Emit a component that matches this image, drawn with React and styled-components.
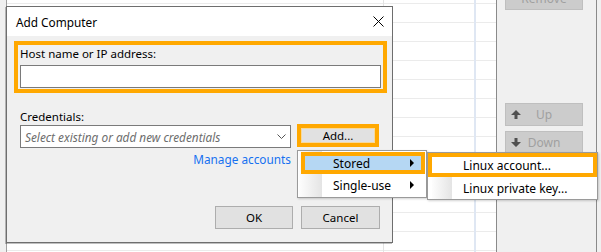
import React from 'react';
import styled, { createGlobalStyle } from 'styled-components';

const ORANGE = '#ffa800';

const GlobalStyle = createGlobalStyle`
  html, body {
    margin: 0;
    padding: 0;
  }
  body {
    font-family: "Noto Sans", "Open Sans", sans-serif;
    font-size: 11.5px;
    color: #000;
  }
  * {
    box-sizing: border-box;
  }
`;

const Screen = styled.div`
  position: relative;
  width: 601px;
  height: 252px;
  overflow: hidden;
  display: flex;
  background: #f0f0f0;
`;

const LeftStrip = styled.div`
  width: 7px;
  background: #f0f0f0;
  border-right: 1px solid #a0a0a0;
`;

const Table = styled.div`
  width: 489px;
  display: flex;
  background: #fff;
`;

const Column = styled.div`
  width: ${p => p.$w ? `${p.$w}px` : 'auto'};
  flex: ${p => p.$w ? 'none' : '1'};
  border-right: ${p => p.$line || 'none'};
  background-image: repeating-linear-gradient(to bottom, #ebebeb 0 1px, transparent 1px 19px);
  background-position: 0 3px;
`;

const Panel = styled.div`
  width: 101px;
  display: flex;
  flex-direction: column;
  padding-left: 8px;
  border-left: 1px solid #8a8a8a;
  border-right: 1px solid #8a8a8a;
  background: #f0f0f0;
`;

const PanelButton = styled.div`
  width: 78px;
  height: 23px;
  margin-top: ${p => p.$top}px;
  display: grid;
  grid-template-columns: 1fr auto 1fr;
  align-items: center;
  background: #cccccc;
  border: 1px solid #bfbfbf;
  color: #a0a0a0;
  font-size: 12px;
  line-height: 21px;
`;

const PanelIcon = styled.svg`
  justify-self: start;
  margin-left: 5px;
`;

const RightStrip = styled.div`
  flex: 1;
  background: #f0f0f0;
`;

const Dialog = styled.div`
  position: absolute;
  left: 6px;
  top: 6px;
  width: 387px;
  height: 237px;
  display: flex;
  flex-direction: column;
  border: 1px solid #6e6e6e;
  background: #f0f0f0;
  box-shadow: -1px 1px 0 rgba(0, 0, 0, 0.25);
`;

const TitleBar = styled.div`
  height: 29px;
  display: flex;
  align-items: center;
  justify-content: space-between;
  padding-left: 9px;
  background: #fff;
  font-size: 11.8px;
`;

const CloseButton = styled.div`
  width: 28px;
  height: 29px;
  display: flex;
  align-items: center;
  justify-content: center;
`;

const Body = styled.div`
  flex: 1;
  display: flex;
  flex-direction: column;
  padding: 5px 5px 13px 7px;
`;

const HostFrame = styled.div`
  border: 4px solid ${ORANGE};
  padding: 1px 2px 1px 2px;
`;

const Label = styled.div`
  line-height: 16px;
  padding-left: ${p => p.$indent || 0}px;
  margin-top: ${p => p.$top || 0}px;
`;

const TextBox = styled.div`
  height: 23px;
  margin-top: 3px;
  background: #fff;
  border: 1px solid #7a7a7a;
`;

const CredRow = styled.div`
  display: flex;
  align-items: flex-start;
  gap: 6px;
  padding-left: 6px;
`;

const SelectCol = styled.div`
  width: 271px;
  display: flex;
  flex-direction: column;
`;

const Select = styled.div`
  height: 23px;
  display: flex;
  align-items: center;
  justify-content: space-between;
  padding: 0 4px 0 4px;
  background: #fff;
  border: 1px solid #7a7a7a;
  font-style: italic;
  font-size: 11.8px;
  color: #6d6d6d;
`;

const Link = styled.div`
  margin-top: 3px;
  line-height: 16px;
  text-align: right;
  font-size: 11.8px;
  color: #1670f0;
`;

const AddFrame = styled.div`
  width: 82px;
  height: 23px;
  margin-top: -1px;
  padding: 1px;
  border: 4px solid ${ORANGE};
  background: #f6d99c;
`;

const AddButton = styled.div`
  height: 100%;
  display: flex;
  align-items: center;
  justify-content: center;
  background: #e1e1e1;
  line-height: 13px;
`;

const ButtonRow = styled.div`
  margin-top: auto;
  display: flex;
  justify-content: flex-end;
  gap: 8px;
  padding-right: 7px;
`;

const Button = styled.div`
  width: ${p => p.$w}px;
  height: 23px;
  display: flex;
  align-items: center;
  justify-content: center;
  background: #e1e1e1;
  border: 1px solid #adadad;
`;

const Menu = styled.div`
  position: absolute;
  left: ${p => p.$x}px;
  top: ${p => p.$y}px;
  width: ${p => p.$w}px;
  padding: ${p => p.$pad};
  background-color: #fff;
  background-image: linear-gradient(to right, transparent ${p => p.$gutter[0]}px, #fdfdfd ${p => p.$gutter[0]}px, #e4e4e4 ${p => p.$gutter[1]}px, transparent ${p => p.$gutter[1]}px);
  border: 1px solid #9a9a9a;
  box-shadow: 1px 1px 2px rgba(0, 0, 0, 0.18);
`;

const MenuItem = styled.div`
  height: ${p => p.$h}px;
  display: flex;
  align-items: center;
  justify-content: space-between;
  padding-left: ${p => p.$hot ? p.$text - 4 : p.$text}px;
  padding-right: ${p => p.$hot ? 7 : 11}px;
  border: ${p => p.$hot ? `4px solid ${ORANGE}` : 'none'};
  background: ${p => p.$fill || 'transparent'};
  font-size: 12px;
`;

const Arrow = styled.span`
  width: 0;
  height: 0;
  border-top: 4px solid transparent;
  border-bottom: 4px solid transparent;
  border-left: 4px solid #000;
`;

const UpIcon = () => (
  <PanelIcon width="10" height="9" viewBox="0 0 10 9">
    <path d="M5 0 L10 5 L6.5 5 L6.5 9 L3.5 9 L3.5 5 L0 5 Z" fill="#505050" />
  </PanelIcon>
);

const DownIcon = () => (
  <PanelIcon width="10" height="9" viewBox="0 0 10 9">
    <path d="M5 9 L10 4 L6.5 4 L6.5 0 L3.5 0 L3.5 4 L0 4 Z" fill="#505050" />
  </PanelIcon>
);

const App = () => (
  <Screen>
    <GlobalStyle />
    <LeftStrip />
    <Table>
      <Column $w={377} $line="1px solid #e3e3e3" />
      <Column $w={92} $line="2px solid #dfe7f3" />
      <Column />
    </Table>
    <Panel>
      <PanelButton $top={-13}>
        <span />
        <span>Remove</span>
        <span />
      </PanelButton>
      <PanelButton $top={93}>
        <UpIcon />
        <span>Up</span>
        <span />
      </PanelButton>
      <PanelButton $top={5}>
        <DownIcon />
        <span>Down</span>
        <span />
      </PanelButton>
    </Panel>
    <RightStrip />

    <Dialog>
      <TitleBar>
        <span>Add Computer</span>
        <CloseButton>
          <svg width="11" height="11" viewBox="0 0 11 11">
            <path d="M0.5 0.5 L10.5 10.5 M10.5 0.5 L0.5 10.5" stroke="#000" strokeWidth="1" />
          </svg>
        </CloseButton>
      </TitleBar>
      <Body>
        <HostFrame>
          <Label>Host name or IP address:</Label>
          <TextBox />
        </HostFrame>
        <Label $indent={6} $top={16}>Credentials:</Label>
        <CredRow>
          <SelectCol>
            <Select>
              <span>Select existing or add new credentials</span>
              <svg width="9" height="5" viewBox="0 0 9 5">
                <polyline points="0.5,0.5 4.5,4.5 8.5,0.5" fill="none" stroke="#555" strokeWidth="1" />
              </svg>
            </Select>
            <Link>Manage accounts</Link>
          </SelectCol>
          <AddFrame>
            <AddButton>Add...</AddButton>
          </AddFrame>
        </CredRow>
        <ButtonRow>
          <Button $w={78}>OK</Button>
          <Button $w={79}>Cancel</Button>
        </ButtonRow>
      </Body>
    </Dialog>

    <Menu $x={297} $y={150} $w={130} $pad="1px 1px 1px 3px" $gutter={[1, 24]}>
      <MenuItem $h={22} $text={32} $hot $fill="#b5d7f3">
        <span>Stored</span>
        <Arrow />
      </MenuItem>
      <MenuItem $h={22} $text={32}>
        <span>Single-use</span>
        <Arrow />
      </MenuItem>
    </Menu>

    <Menu $x={427} $y={152} $w={171} $pad="0" $gutter={[4, 24]}>
      <MenuItem $h={24} $text={35} $hot $fill="#fff">
        <span>Linux account...</span>
      </MenuItem>
      <MenuItem $h={22} $text={35}>
        <span>Linux private key...</span>
      </MenuItem>
    </Menu>
  </Screen>
);

export default App;
